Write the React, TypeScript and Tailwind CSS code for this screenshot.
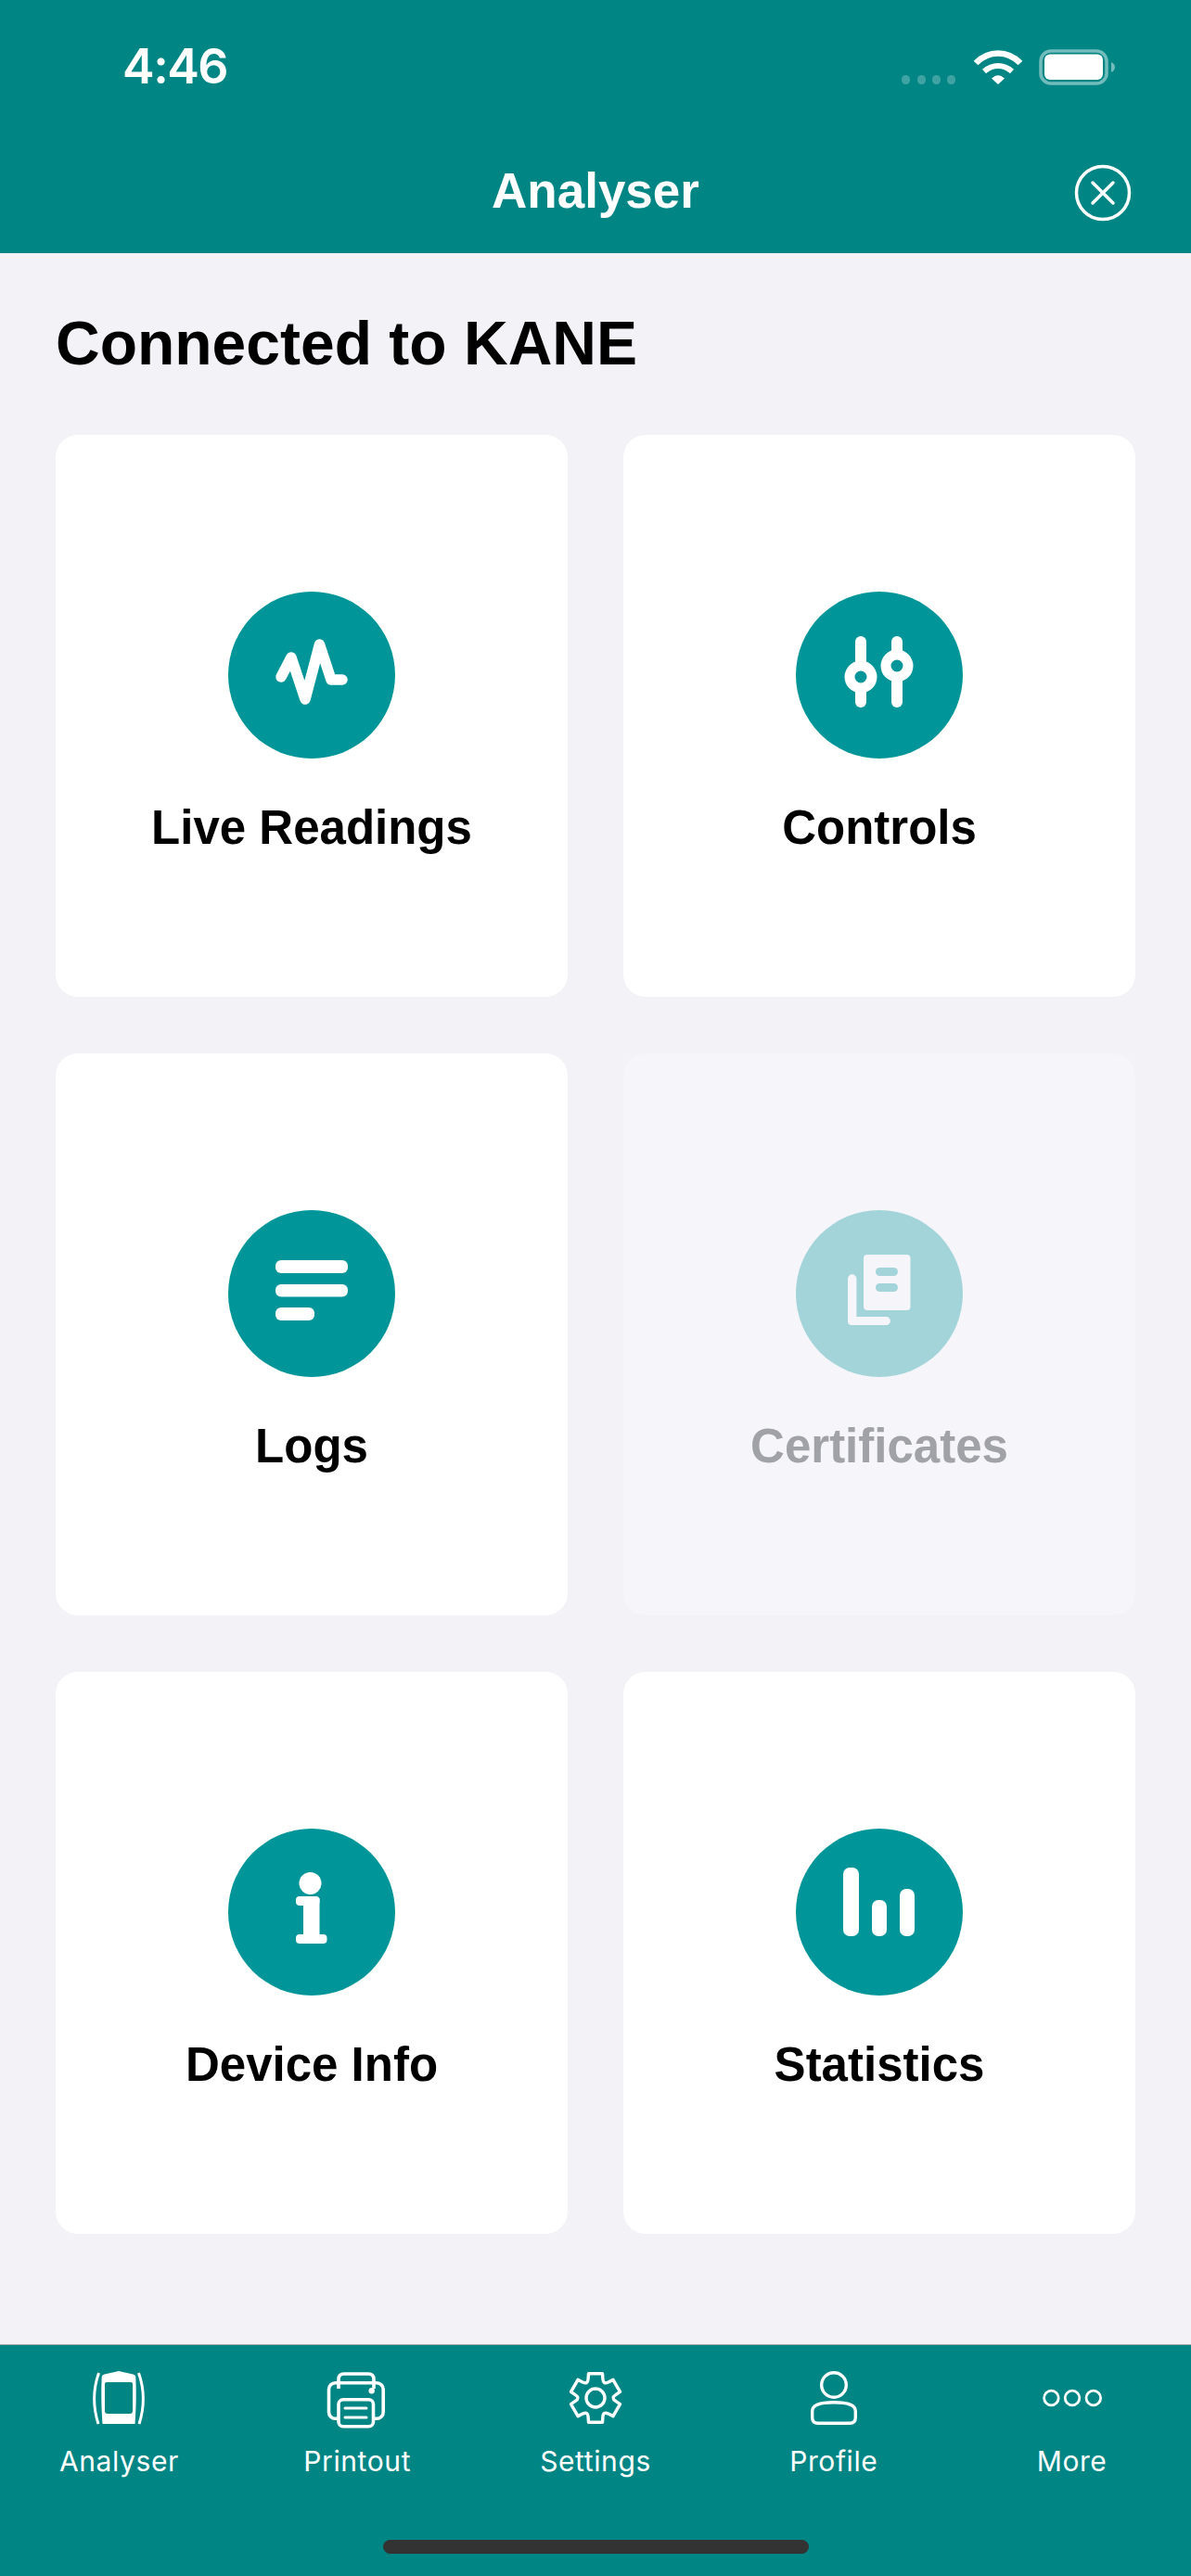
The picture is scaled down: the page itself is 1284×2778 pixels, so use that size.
import { ReactNode } from "react"

const arial = "font-['Liberation_Sans',Arial,sans-serif]"

function gearPath() {
  // six squared teeth with rounded notches, centred on 0,0
  const pt = (r: number, deg: number) => {
    const a = (deg * Math.PI) / 180
    return `${(r * Math.cos(a)).toFixed(2)} ${(r * Math.sin(a)).toFixed(2)}`
  }
  let d = ""
  for (let k = 0; k < 6; k++) {
    const a = -90 + k * 60
    d += `${k === 0 ? "M" : "L"}${pt(22, a - 21)} L${pt(27.3, a - 16)} L${pt(27.3, a + 16)} L${pt(22, a + 21)} Q${pt(16.5, a + 30)} ${pt(22, a + 39)} `
  }
  return d + "Z"
}

function LiveIcon() {
  return (
    <polyline points="57,92 68,71 83,116 98.5,57 111,95 123,95" fill="none" stroke="currentColor" strokeWidth="11.5" strokeLinecap="round" strokeLinejoin="round" />
  )
}

function ControlsIcon({ hole }: { hole: string }) {
  return (
    <g fill="currentColor">
      <rect x="64" y="48" width="12" height="77" rx="6" />
      <rect x="103" y="48" width="12" height="77" rx="6" />
      <circle cx="70" cy="92" r="12" fill={hole} stroke="currentColor" strokeWidth="11" />
      <circle cx="109" cy="80" r="12" fill={hole} stroke="currentColor" strokeWidth="11" />
    </g>
  )
}

function LogsIcon() {
  return (
    <g fill="currentColor">
      <rect x="51" y="54" width="78" height="14" rx="6" />
      <rect x="51" y="80" width="78" height="13.5" rx="6" />
      <rect x="51" y="105" width="42" height="14" rx="6" />
    </g>
  )
}

function CertificatesIcon({ hole }: { hole: string }) {
  return (
    <g fill="currentColor">
      <rect x="73" y="48" width="50.5" height="60" rx="4" />
      <rect x="86" y="62" width="24" height="9" rx="4.5" fill={hole} />
      <rect x="86" y="79" width="24" height="9" rx="4.5" fill={hole} />
      <path d="M56 74a4.7 4.7 0 0 1 9.400 0V115h32a4.500 4.500 0 0 1 0 9H60a4 4 0 0 1-4-4Z" />
    </g>
  )
}

function InfoIcon() {
  return (
    <g fill="currentColor">
      <circle cx="88.500" cy="59" r="12" />
      <rect x="73" y="73" width="25.500" height="10" rx="4" />
      <rect x="81" y="75" width="17.500" height="43" />
      <rect x="73" y="114" width="33.500" height="10" rx="4" />
    </g>
  )
}

function StatsIcon() {
  return (
    <g fill="currentColor">
      <rect x="51" y="42" width="17" height="74" rx="7" />
      <rect x="82" y="77" width="16" height="39" rx="7" />
      <rect x="112" y="65" width="16" height="51" rx="7" />
    </g>
  )
}

function Card({ label, icon, disabled }: { label: string; icon: ReactNode; disabled?: boolean }) {
  return (
    <div className={`h-[606px] rounded-[24px] flex flex-col items-center pt-[169px] ${disabled ? "bg-[#f5f5fa]" : "bg-white"}`}>
      <div className={`w-[180px] h-[180px] rounded-full ${disabled ? "bg-[#a3d4d9] text-[#f5f5fa]" : "bg-[#009699] text-white"}`}>
        <svg width="180" height="180" viewBox="0 0 180 180">{icon}</svg>
      </div>
      <div className={`${arial} mt-[45px] text-[51px] leading-[60px] font-bold ${disabled ? "text-[#a1a1a8]" : "text-black"}`}>{label}</div>
    </div>
  )
}

function Tab({ label, children }: { label: string; children: ReactNode }) {
  return (
    <div className="flex-1 flex flex-col items-center">
      <svg width="80" height="64" viewBox="-40 -32 80 64" className="text-white">{children}</svg>
      <div className="mt-[17px] font-['Inter',sans-serif] text-[30px] leading-[36px] tracking-[0.6px] text-white">{label}</div>
    </div>
  )
}

export default function App() {
  return (
    <div className="w-[1284px] h-[2778px] flex flex-col bg-[#f2f2f7]">
      {/* Header */}
      <header className="h-[273px] bg-[#008585] text-white shrink-0">
        <div className="h-[176px] flex items-start justify-between pt-[42px] pl-[132px] pr-[81px]">
          <div className="font-['Inter',sans-serif] text-[52px] leading-[60px] font-semibold tracking-[-1.5px]">4:46</div>
          <svg width="232" height="44" viewBox="971 51 232 44" className="mt-[9px]">
            <g fill="#ffffff" fillOpacity="0.25">
              <rect x="972" y="81" width="9" height="10" rx="4.500" />
              <rect x="989" y="81" width="9" height="10" rx="4.500" />
              <rect x="1005" y="81" width="9" height="10" rx="4.500" />
              <rect x="1021" y="81" width="9" height="10" rx="4.500" />
            </g>
            <path d="M1052 68c14-14 34-14 48 0" fill="none" stroke="#fff" strokeWidth="6.500" />
            <path d="M1061 77c9-8 21-8 30 0" fill="none" stroke="#fff" strokeWidth="6" />
            <path d="M1069 84.500c5-4.500 9-4.500 14 0l-7 6.500Z" fill="#fff" />
            <rect x="1122" y="55" width="71" height="35" rx="11" fill="none" stroke="#fff" strokeOpacity="0.45" strokeWidth="3.500" />
            <rect x="1126" y="58.500" width="63" height="27.500" rx="6" fill="#fff" />
            <path d="M1198 67c2.500 1 4 3 4 5.500s-1.500 4.500-4 5.500Z" fill="#fff" fillOpacity="0.45" />
          </svg>
        </div>
        <div className="relative flex justify-center">
          <div className={`${arial} text-[53px] leading-[60px] font-bold`}>Analyser</div>
          <svg width="62" height="62" viewBox="0 0 62 62" fill="none" stroke="currentColor" strokeWidth="3.500" strokeLinecap="round" className="absolute right-[64px] top-[1px]">
            <circle cx="31" cy="31" r="28.500" />
            <path d="M20 20l22 22M42 20l-22 22" />
          </svg>
        </div>
      </header>

      {/* Menu grid */}
      <main className="flex-1 px-[60px] pt-[59px]">
        <h1 className={`${arial} text-[66px] leading-[76px] font-bold text-black`}>Connected to KANE</h1>
        <div className="mt-[61px] grid grid-cols-2 gap-x-[60px] gap-y-[61px]">
          <Card label="Live Readings" icon={<LiveIcon />} />
          <Card label="Controls" icon={<ControlsIcon hole="#009699" />} />
          <Card label="Logs" icon={<LogsIcon />} />
          <Card label="Certificates" icon={<CertificatesIcon hole="#a3d4d9" />} disabled />
          <Card label="Device Info" icon={<InfoIcon />} />
          <Card label="Statistics" icon={<StatsIcon />} />
        </div>
      </main>

      {/* Tab bar */}
      <footer className="h-[250px] shrink-0 bg-[#008585] border-t border-[#a3a3a8] flex flex-col">
        <div className="flex pt-[26px]">
          <Tab label="Analyser">
            <path fill="#fff" fillRule="evenodd" d="M0-30L15.500-26.500Q18-26 18.300-24Q19.500 0 17.500 27H-17.500Q-19.500 0-18.300-24Q-18-26-15.500-26.500ZM-13-18Q-15-18-15-16V13Q-15 16-12 16H12Q15 16 15 13V-16Q15-18 13-18Z" />
            <path d="M-21.500-28Q-31-1-22 27M21.500-28Q31-1 22 27" fill="none" stroke="#fff" strokeWidth="3" />
          </Tab>
          <Tab label="Printout">
            <g fill="none" stroke="#fff" strokeWidth="3.600">
              <path d="M-20-11V-21Q-20-27-14-27H12Q18-27 18-21V-11" />
              <rect x="-30.500" y="-17.200" width="58.700" height="38.400" rx="7" />
              <rect x="-20" y="0.800" width="37.500" height="29" rx="5" fill="#008585" />
              <path d="M-13 10H10M-13 20H10" strokeLinecap="round" strokeWidth="3" />
            </g>
            <circle cx="15.700" cy="-8.700" r="3.200" fill="#fff" />
          </Tab>
          <Tab label="Settings">
            <g transform="translate(0 -1)">
              <path d={gearPath()} fill="none" stroke="#fff" strokeWidth="3.400" strokeLinejoin="round" />
              <circle r="10" fill="none" stroke="#fff" strokeWidth="3.400" />
            </g>
          </Tab>
          <Tab label="Profile">
            <g fill="none" stroke="#fff" strokeWidth="3.400">
              <circle cx="0" cy="-15" r="13.300" />
              <path d="M-23.300 13C-23.300 6-12 3.700 0 3.700S23.300 6 23.300 13V20Q23.300 26.300 17 26.300H-17Q-23.300 26.300-23.300 20Z" />
            </g>
          </Tab>
          <Tab label="More">
            <g fill="none" stroke="#fff" strokeWidth="2.800">
              <circle cx="-22.600" cy="-1" r="7.800" />
              <circle cx="0" cy="-1" r="7.800" />
              <circle cx="22.800" cy="-1" r="7.800" />
            </g>
          </Tab>
        </div>
        <div className="mt-[67px] mx-auto w-[459px] h-[15px] rounded-full bg-[#333333]" />
      </footer>
    </div>
  )
}
